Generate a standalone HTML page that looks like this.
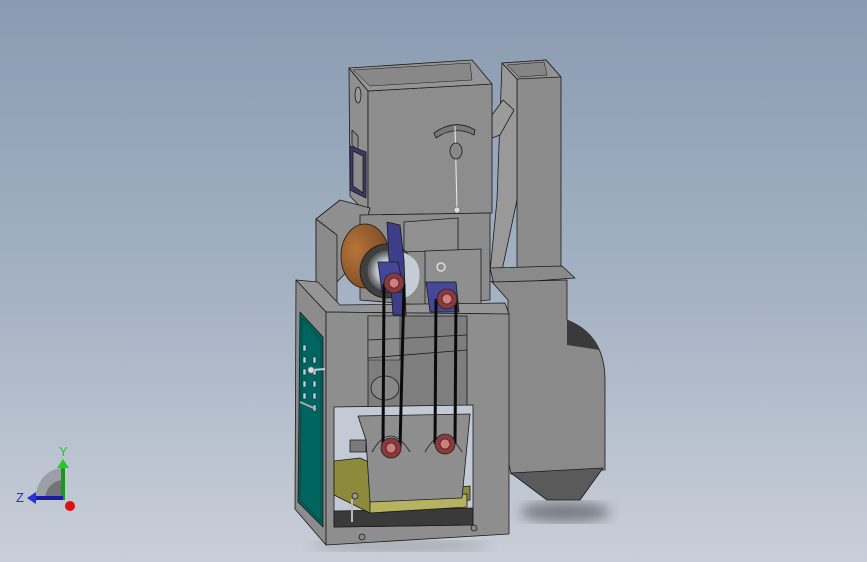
<!DOCTYPE html>
<html><head><style>
html,body{margin:0;padding:0;width:867px;height:562px;overflow:hidden}
body{background:linear-gradient(#8a9bb1 0%,#a3b1c3 50%,#c9cfd8 100%)}
svg{position:absolute;left:0;top:0}
</style></head><body>
<svg width="867" height="562" viewBox="0 0 867 562" stroke-linejoin="round">
<defs>
<filter id="bl"><feGaussianBlur stdDeviation="6"/></filter>
<radialGradient id="br" cx="0.3" cy="0.4" r="0.7"><stop offset="0" stop-color="#b8753a"/><stop offset="1" stop-color="#7a4a22"/></radialGradient>
<radialGradient id="wh" cx="0.5" cy="0.5" r="0.5"><stop offset="0" stop-color="#e8ecf2"/><stop offset="0.6" stop-color="#b9c0cc"/><stop offset="1" stop-color="#555"/></radialGradient>
</defs>
<ellipse cx="565" cy="512" rx="45" ry="10" fill="#333" opacity="0.5" filter="url(#bl)"/>
<ellipse cx="400" cy="546" rx="90" ry="5" fill="#555" opacity="0.35" filter="url(#bl)"/>

<g stroke="#1a1a1a" stroke-width="0.8">
<!-- chute -->
<polygon points="502,63 546,60 561,77 561,270 517,272 517,79" fill="#8c8c8c"/>
<polygon points="502,63 517,79 517,200 500,280 489,282 497,200" fill="#999"/>
<polygon points="502,63 546,60 561,77 517,79" fill="#929292"/>
<polygon points="507,65 544,62 547,75 519,77" fill="#858585" stroke-width="0.5"/>
<polygon points="490,268 562,266 575,278 494,284" fill="#8a8a8a"/>
<polygon points="492,115 503,100 514,110 500,135 492,138" fill="#9b9b9b"/>
<!-- right lower body -->
<path d="M492,282 L567,280 L567,320 Q605,335 605,380 L605,470 L511,474 L508,460 L508,300 Z" fill="#8a8a8a"/>
<path d="M567,320 Q590,328 600,350 L567,345 Z" fill="#3a3a3a" stroke="none"/>
<polygon points="511,473 603,468 580,500 547,500" fill="#5a5a5a"/>
<!-- hopper -->
<polygon points="349,68 368,91 368,215 350,196" fill="#8f8f8f"/>
<polygon points="368,91 492,84 492,213 368,215" fill="#8d8d8d"/>
<polygon points="349,68 472,60 492,84 368,91" fill="#959595"/>
<polygon points="353,70 470,63 472,80 370,86" fill="#888" stroke-width="0.5"/>
<ellipse cx="358" cy="95" rx="3" ry="8" fill="#999"/>
<polygon points="352,130 358,136 358,150 352,145" fill="#8a8a8a"/>
<polygon points="350,146 366,152 366,198 350,190" fill="#3a3a6a"/>
<polygon points="353,151 363,156 363,193 353,186" fill="#8d8d8d"/>
<path d="M434,133 Q455,118 475,130 L474,135 Q455,125 436,138 Z" fill="#777"/>
<line x1="455" y1="126" x2="457" y2="210" stroke="#eee" stroke-width="1"/>
<ellipse cx="456" cy="151" rx="6" ry="8" fill="#888"/>
<circle cx="457" cy="210" r="3" fill="#ddd" stroke="#777"/>
<!-- upper mid housing -->
<polygon points="316,219 340,200 370,208 356,262 337,282 316,270" fill="#8f8f8f"/>
<polygon points="316,219 337,235 337,305 316,290" fill="#8a8a8a"/>
<polygon points="360,215 490,213 490,300 420,305 360,300" fill="#8c8c8c"/>
<polygon points="404,222 458,218 458,250 404,252" fill="#909090"/>
<ellipse cx="365" cy="256" rx="24" ry="32" fill="url(#br)"/>
<circle cx="387" cy="271" r="27" fill="#3f3f3f"/>
<circle cx="388" cy="271" r="20" fill="url(#wh)" stroke="#666"/>
<path d="M400,252 Q420,255 420,275 Q420,295 400,300" fill="#c6ccd6" stroke="#888"/>
<polygon points="425,251 481,249 481,305 425,308" fill="#8f8f8f"/>
<circle cx="441" cy="267" r="4" fill="none" stroke="#ddd" stroke-width="1.5"/>
<!-- lower frame -->
<polygon points="296,280 326,312 326,545 295,509" fill="#8c8c8c"/>
<polygon points="296,280 318,282 340,305 505,303 509,314 326,312" fill="#959595"/>
<polygon points="326,312 509,314 509,534 326,545" fill="#8e8e8e"/>
<polygon points="300,312 323,337 323,527 298,502" fill="#00655f"/>
<polygon points="302,318 321,340 321,522 300,500" fill="none" stroke="#0a3f3c"/>
<polygon points="368,316 467,316 467,407 368,410" fill="#7e7e7e"/>
<polygon points="368,316 400,316 400,360 368,360" fill="#8a8a8a" stroke-width="0.6"/>
<line x1="368" y1="358" x2="467" y2="350"/>
<line x1="368" y1="340" x2="467" y2="335"/>
<ellipse cx="385" cy="388" rx="14" ry="12" fill="#888"/>
<polygon points="334,407 473,405 473,525 334,527" fill="#c3cad6"/>
<polygon points="334,511 473,508 473,525 334,527" fill="#3a3a3a"/>
<polygon points="334,461 360,458 430,490 470,486 470,500 370,513 334,495" fill="#8e8a3c"/>
<polygon points="370,498 467,494 467,507 370,513" fill="#b7b260"/>
<polygon points="358,416 470,414 462,498 370,502 366,440" fill="#8e8e8e"/>
<polygon points="350,440 366,440 366,452 350,452" fill="#7b7b7b"/>
<path d="M372,452 Q390,420 410,452" fill="none"/>
<path d="M425,452 Q443,420 462,452" fill="none"/>
<circle cx="355" cy="496" r="3" fill="#999"/>
<line x1="352" y1="499" x2="352" y2="522" stroke="#bbb" stroke-width="2"/>
<circle cx="362" cy="537" r="3" fill="#888"/>
<circle cx="474" cy="528" r="3" fill="#888"/>
<polygon points="387,222 400,225 404,260 406,315 393,315 389,260" fill="#3c3e8a"/>
<polygon points="378,262 398,262 404,292 382,292" fill="#444798"/>
<polygon points="426,282 456,282 459,312 430,312" fill="#454898"/>
<g fill="none" stroke="#0a0a0a" stroke-width="3">
<line x1="384" y1="284" x2="383" y2="448"/><line x1="404" y1="284" x2="400" y2="448"/>
<line x1="436" y1="299" x2="435" y2="444"/><line x1="456" y1="299" x2="455" y2="444"/>
</g>
<g fill="#8a3a3a" stroke="#222">
<circle cx="394" cy="283" r="10"/><circle cx="391" cy="448" r="10"/>
<circle cx="447" cy="299" r="10"/><circle cx="445" cy="444" r="10"/>
</g>
<g fill="#c98080" stroke="#5a1a1a">
<circle cx="394" cy="283" r="5"/><circle cx="391" cy="448" r="5"/>
<circle cx="447" cy="299" r="5"/><circle cx="445" cy="444" r="5"/>
</g>
<g fill="#bcd" stroke="#123" stroke-width="0.5">
<rect x="303" y="345" width="3" height="6"/><rect x="303" y="357" width="3" height="6"/><rect x="303" y="369" width="3" height="6"/><rect x="303" y="381" width="3" height="6"/><rect x="303" y="393" width="3" height="6"/>
<rect x="313" y="357" width="3" height="6"/><rect x="313" y="369" width="3" height="6"/><rect x="313" y="381" width="3" height="6"/><rect x="313" y="393" width="3" height="6"/><rect x="313" y="405" width="3" height="6"/>
</g>
<line x1="312" y1="370" x2="325" y2="369" stroke="#ccc" stroke-width="2"/>
<circle cx="311" cy="370" r="3" fill="#ddd" stroke="#888"/>
<line x1="300" y1="402" x2="316" y2="409" stroke="#aaa" stroke-width="2"/>
</g>

<path d="M62,500 L35,497 Q40,470 62,468 Z" fill="#666" opacity="0.4"/>
<path d="M62,500 L45,497 Q48,482 62,480 Z" fill="#333" opacity="0.4"/>
<rect x="61" y="466" width="4" height="34" fill="#1a9a1a"/>
<polygon points="57,468 63,459 69,468" fill="#22cc22"/>
<rect x="35" y="496" width="28" height="4" fill="#1a1aaa"/>
<polygon points="36,492 27,498 36,504" fill="#2233dd"/>
<circle cx="70" cy="506" r="5" fill="#dd1111"/>
<text x="59" y="456" font-family="Liberation Sans,sans-serif" font-size="13" fill="#22cc22">Y</text>
<text x="16" y="502" font-family="Liberation Sans,sans-serif" font-size="13" fill="#2233dd">Z</text>
</svg>
</body></html>
